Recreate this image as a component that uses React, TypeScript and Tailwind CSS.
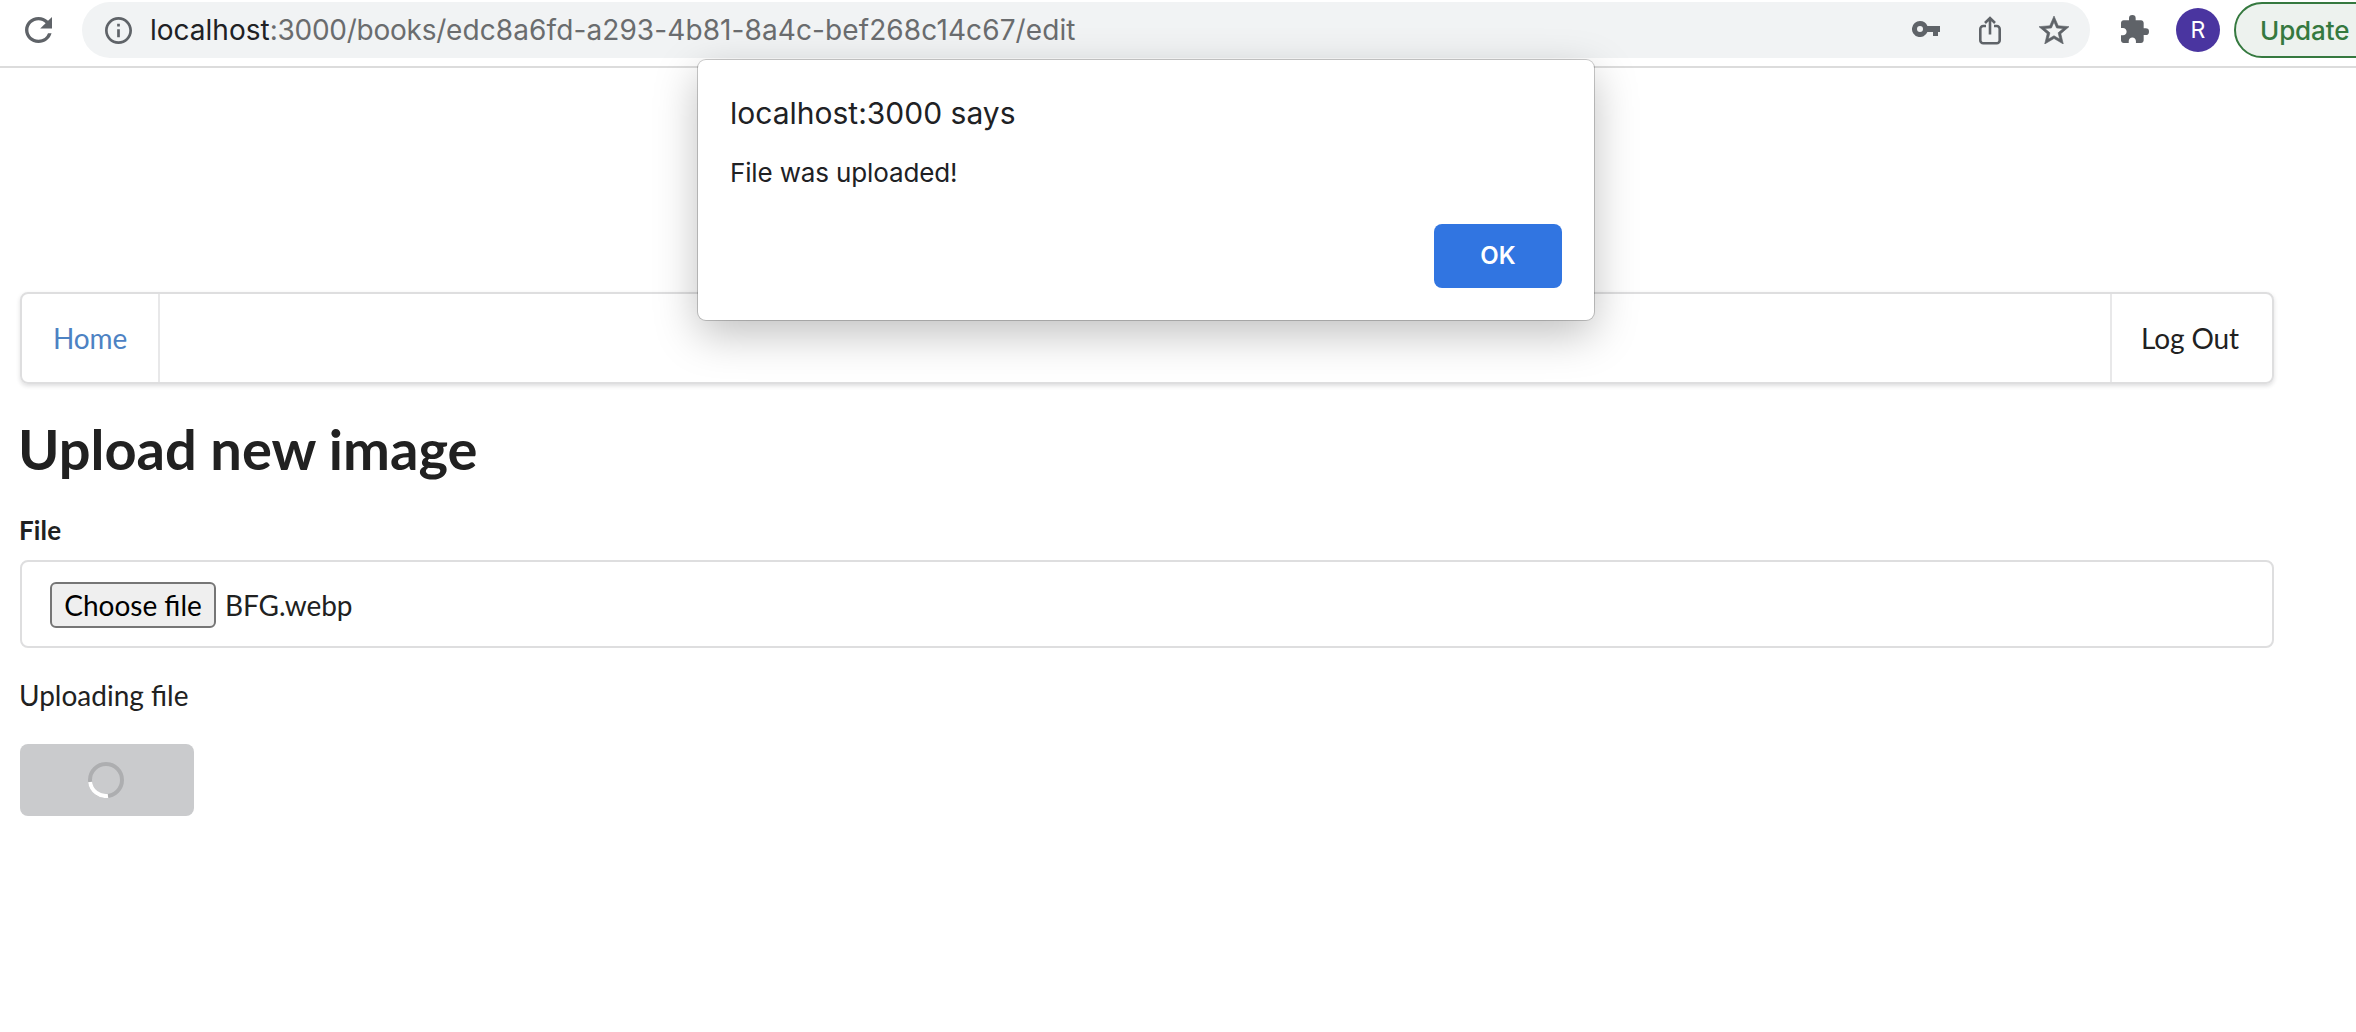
import React from "react";

function ReloadIcon() {
  return (
    <svg className="h-[26px] w-[27px]" viewBox="4 4 16 16" preserveAspectRatio="none" fill="#5f6368">
      <path d="M17.65 6.35A7.958 7.958 0 0 0 12 4c-4.42 0-7.99 3.58-7.99 8s3.57 8 7.99 8c3.73 0 6.84-2.55 7.73-6h-2.08A5.99 5.99 0 0 1 12 18c-3.31 0-6-2.69-6-6s2.69-6 6-6c1.66 0 3.14.69 4.22 1.78L13 11h7V4l-2.35 2.35z" />
    </svg>
  );
}

function InfoIcon() {
  return (
    <svg className="size-[27px]" viewBox="2 2 20 20" fill="#5f6368">
      <path d="M11 7h2v2h-2zm0 4h2v6h-2zm1-9C6.48 2 2 6.48 2 12s4.48 10 10 10 10-4.48 10-10S17.52 2 12 2zm0 18c-4.41 0-8-3.59-8-8s3.59-8 8-8 8 3.59 8 8-3.59 8-8 8z" />
    </svg>
  );
}

function KeyIcon() {
  return (
    <svg className="ml-auto -mt-0.5 h-4 w-7" viewBox="0 0 28 16" fill="#5f6368">
      <path
        fillRule="evenodd"
        d="M8 0a8 8 0 1 0 7.4 11H21v4h5v-4h2V5H15.4A8 8 0 0 0 8 0zm0 5a3 3 0 1 1 0 6 3 3 0 0 1 0-6z"
      />
    </svg>
  );
}

function ShareIcon() {
  return (
    <svg className="ml-[39px] h-[29px] w-[22px]" viewBox="0 0 22 29" fill="none" stroke="#5f6368" strokeWidth="2.6">
      <path d="M7 10H4.300a3 3 0 0 0-3 3v11.200a3 3 0 0 0 3 3h13.400a3 3 0 0 0 3-3V13a3 3 0 0 0-3-3H15" />
      <path d="M11 18.500V2.200M6 7l5-5 5 5" />
    </svg>
  );
}

function StarIcon() {
  return (
    <svg className="ml-[38px] h-7 w-[30px]" viewBox="2 2 20 19" preserveAspectRatio="none" fill="#5f6368">
      <path
        stroke="#5f6368"
        strokeWidth="0.4"
        d="M22 9.240l-7.190-.620L12 2 9.190 8.630 2 9.240l5.460 4.730L5.820 21 12 17.270 18.180 21l-1.630-7.030L22 9.240zM12 15.400l-3.760 2.270 1-4.280-3.320-2.880 4.380-.380L12 6.100l1.710 4.040 4.380.380-3.320 2.880 1 4.280L12 15.400z"
      />
    </svg>
  );
}

function PuzzleIcon() {
  return (
    <svg className="ml-[31px] -mt-0.5 size-7" viewBox="2 1 21 21" fill="#5f6368">
      <path d="M20.500 11H19V7c0-1.100-.9-2-2-2h-4V3.500a2.500 2.500 0 0 0-5 0V5H4c-1.100 0-1.990.9-1.990 2v3.800H3.500c1.490 0 2.700 1.210 2.700 2.700s-1.210 2.700-2.700 2.700H2V20c0 1.100.9 2 2 2h3.800v-1.500c0-1.490 1.210-2.700 2.700-2.700s2.700 1.210 2.700 2.700V22H17c1.100 0 2-.9 2-2v-4h1.500a2.500 2.500 0 0 0 0-5z" />
    </svg>
  );
}

function BrowserToolbar() {
  return (
    <header className="flex h-[68px] items-start overflow-hidden border-b-2 border-[#dcdcdc] pt-0.5 pl-[25px]">
      <div className="flex h-14 items-center">
        <ReloadIcon />
      </div>
      <div className="ml-[30px] flex h-14 w-[2008px] shrink-0 items-center rounded-full bg-[#f1f3f4] pr-[21px] pl-[23px]">
        <InfoIcon />
        <span className="ml-[18px] pt-px text-[28px] leading-[55px] whitespace-nowrap text-[#6a6c6e]">
          <span className="text-[#202124]">localhost</span>
          <span className="tracking-[-0.25px]">:3000/books/</span>
          <span className="tracking-[0.1px]">edc8a6fd-a293-4b81-8a4c-bef268c14c67/edit</span>
        </span>
        <KeyIcon />
        <ShareIcon />
        <StarIcon />
      </div>
      <div className="flex h-14 shrink-0 items-center">
        <PuzzleIcon />
        <div className="ml-[27px] flex size-11 items-center justify-center rounded-full bg-[#4a35a0] text-[23px] text-white">R</div>
        <div className="ml-3.5 flex h-14 w-[240px] items-center rounded-full border-2 border-[#35793f] bg-[#edf2ee] pl-6 text-[26px] font-medium tracking-[-0.1px] text-[#35793f]">
          <span className="pt-px">Update</span>
        </div>
      </div>
    </header>
  );
}

function AlertDialog() {
  return (
    <div
      role="alertdialog"
      className="absolute top-[60px] left-[698px] flex h-[260px] w-[896px] flex-col rounded-lg bg-white px-8 pt-8 pb-8 text-[#202124] shadow-[0_0_0_1px_rgba(0,0,0,0.2),0_14px_44px_rgba(0,0,0,0.25)]"
    >
      <h2 className="h-11 text-[30px] leading-[43px]"><span>localhost:3000 says</span></h2>
      <p className="mt-[17px] text-[26px] leading-10 tracking-[-0.14px]"><span>File was uploaded!</span></p>
      <button className="mt-auto h-16 w-32 self-end rounded-lg bg-[#3175e1] text-[24px] font-semibold text-white">OK</button>
    </div>
  );
}

function MenuBar() {
  return (
    <nav className="flex h-[92px] justify-between rounded-lg border-2 border-[#dededf] text-[28px] leading-[88px] shadow-[0_2px_4px_rgba(34,36,38,0.15)]">
      <a className="w-[138px] border-r-2 border-[#e8e8e9] pl-[31px] tracking-[-0.1px] text-[#4d82c3]"><span>Home</span></a>
      <a className="w-[162px] border-l-2 border-[#e8e8e9] pl-[29px] tracking-[-0.1px]"><span>Log Out</span></a>
    </nav>
  );
}

export default function App() {
  return (
    <div className="relative h-[1032px] w-[2356px] overflow-hidden bg-white font-['Inter',sans-serif]">
      <BrowserToolbar />
      <main className="mt-56 ml-5 w-[2254px] font-['Lato',sans-serif] text-[#212121]">
        <MenuBar />
        <h1 className="mt-[27px] -ml-[2px] text-[56px] leading-[76px] font-bold"><span>Upload new image</span></h1>
        <div className="mt-6 -ml-px h-[49px] text-[26px] leading-[38px] font-bold tracking-[0.15px]"><span>File</span></div>
        <div className="flex h-[88px] items-center rounded-lg border-2 border-[#dededf] pl-7 text-[28px]">
          <button className="mt-0.5 h-[46px] w-[166px] rounded-md border-2 border-[#767676] bg-[#efefef] leading-[42px] whitespace-nowrap text-black">
            Choose file
          </button>
          <span className="mt-0.5 ml-[9px] leading-[42px] tracking-[-0.1px]">BFG.webp</span>
        </div>
        <p className="mt-[27px] -ml-px text-[28px] leading-10"><span>Uploading file</span></p>
        <div className="mt-[29px] flex h-[72px] w-[174px] items-center rounded-lg bg-[#cacbcd] pl-[68px]">
          <svg className="size-9" viewBox="0 0 36 36" fill="none" strokeWidth="4">
            <circle cx="18" cy="18" r="16" stroke="#adaeb0" />
            <path d="M20 33.900A16 16 0 0 1 2.100 20" stroke="#fff" />
          </svg>
        </div>
      </main>
      <AlertDialog />
    </div>
  );
}
